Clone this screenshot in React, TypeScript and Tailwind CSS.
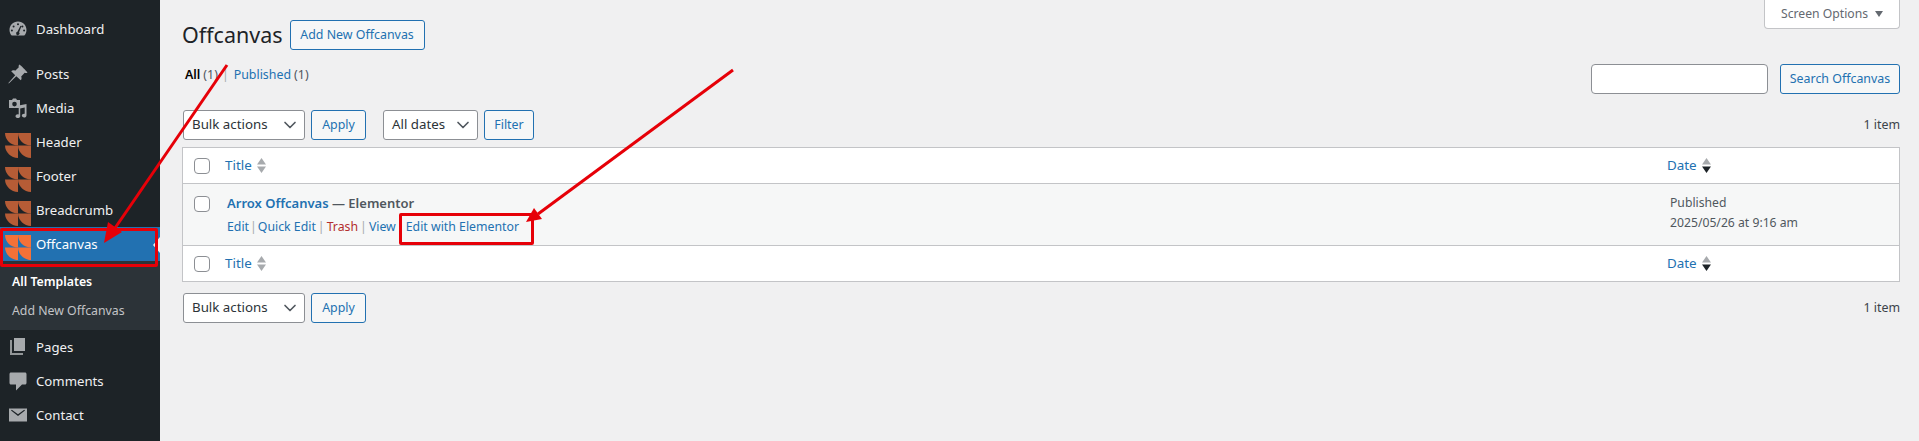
import { ChevronDown } from 'lucide-react';

const FONT = "font-['Noto_Sans',sans-serif]";

function LogoIcon({ color }: { color: string }) {
  return (
    <svg viewBox="0 0 26 25" className="w-[26px] h-[25px] shrink-0 mt-[7px]" fill={color}>
      <path d="M0 0H13V12.500C6 12.500 0 7 0 0Z" />
      <path d="M13 0H26V12.500C19 12.500 13 7 13 0Z" />
      <path d="M0 12.500H13V25C6 25 0 19 0 12.500Z" />
      <path d="M13 12.500H26V25C19 25 13 19 13 12.500Z" />
    </svg>
  );
}

function DashIcon() {
  return (
    <svg viewBox="0 0 20 20" className="w-[20px] h-[20px]" fill="#a7aaad">
      <path d="M10 2.500C5 2.500 1.500 6.300 1.500 11c0 2.200.8 4.200 2.200 5.600h12.600c1.400-1.400 2.200-3.400 2.200-5.600 0-4.700-3.500-8.500-8.500-8.500zM10 4.300a1 1 0 110 2 1 1 0 010-2zM5.600 6.400a1 1 0 110 2 1 1 0 010-2zM14.400 6.400a1 1 0 110 2 1 1 0 010-2zM3.900 10.600a1 1 0 110 2 1 1 0 010-2zM16.100 10.600a1 1 0 110 2 1 1 0 010-2zM12.500 6.800l.9.400-2.300 6.100a1.700 1.700 0 11-1.700-.5z" fillRule="evenodd" />
    </svg>
  );
}

function PinIcon() {
  return (
    <svg viewBox="0 0 20 20" className="w-[20px] h-[20px]" fill="#a7aaad">
      <path d="M11.500.5c2 1.500 6 5.500 8 8-.8.600-1.800.700-2.800.3l-3.500 3.600c.6 1.500.4 2.900-.4 3.900L8.300 12.300.8 19.500l-.4-.4 6.800-7.900-4-4c1-.9 2.500-1.100 4-.5l3.600-3.500c-.4-1.100-.1-2 .7-2.700z" />
    </svg>
  );
}

function MediaIcon() {
  return (
    <svg viewBox="0 0 20 20" className="w-[20px] h-[20px]" fill="#a7aaad">
      <path fillRule="evenodd" d="M1 2h3l1-1.500h3L9 2h3v8H1zM6.500 3.800a2.300 2.300 0 100 4.600 2.300 2.300 0 000-4.600z" />
      <path d="M18.500 6v11.200c0 1.400-1.100 2.300-2.400 2.300s-2.300-.8-2.300-1.900 1-1.900 2.200-1.900c.3 0 .5 0 .7.100V9.500l-4.500 1V18.500c0 .9-1 1.500-2.300 1.500S7.500 19.200 7.500 18.200s1-1.900 2.300-1.900c.3 0 .6 0 .9.100V7.500z" />
    </svg>
  );
}

function PagesIcon() {
  return (
    <svg viewBox="0 0 20 20" className="w-[20px] h-[20px]" fill="#a7aaad">
      <path d="M6 1h11v13H6z" />
      <path d="M4 3v13h11v2H2V3z" opacity="0.85" />
    </svg>
  );
}

function CommentIcon() {
  return (
    <svg viewBox="0 0 20 20" className="w-[20px] h-[20px]" fill="#a7aaad">
      <path d="M3 1.500h14c.8 0 1.500.7 1.500 1.500v9c0 .8-.7 1.500-1.500 1.500h-3l-6 6v-6H3c-.8 0-1.500-.7-1.500-1.500V3c0-.8.7-1.500 1.500-1.500z" />
    </svg>
  );
}

function MailIcon() {
  return (
    <svg viewBox="0 0 20 20" className="w-[20px] h-[20px]" fill="#a7aaad">
      <path d="M1 3.500h18v13H1zM3 5.500l7 5.500 7-5.500-.8-.8L10 9.300 3.800 4.700z" fillRule="evenodd" />
    </svg>
  );
}

function MenuItem({ icon, label, active }: { icon: React.ReactNode; label: string; active?: boolean }) {
  return (
    <div className={`h-[34px] flex items-center shrink-0 relative ${active ? 'bg-[#2271b1] text-white' : 'text-[#f0f0f1]'}`}>
      <div className="w-[36px] flex justify-center items-center">{icon}</div>
      <span className="text-[13.2px] mt-[1px]">{label}</span>
    </div>
  );
}

function SortArrows({ dark }: { dark?: boolean }) {
  return (
    <svg viewBox="0 0 9 15" className="w-[9px] h-[15px] ml-[5px]">
      <path d="M4.500 0L9 6.500H0z" fill="#a7aaad" />
      <path d="M4.500 15L0 8.500h9z" fill={dark ? '#1d2327' : '#a7aaad'} />
    </svg>
  );
}

function Checkbox() {
  return <div className="w-[16px] h-[16px] bg-white border border-[#8c8f94] rounded-[4px] shrink-0" />;
}

function WpButton({ children, className = '' }: { children: React.ReactNode; className?: string }) {
  return (
    <div className={`h-[30px] flex items-center justify-center border border-[#2271b1] rounded-[3px] bg-[#f6f7f7] text-[#2271b1] text-[12.4px] ${className}`}>
      {children}
    </div>
  );
}

function WpSelect({ label, className = '' }: { label: string; className?: string }) {
  return (
    <div className={`h-[30px] flex items-center justify-between pl-[8px] pr-[4px] border border-[#8c8f94] rounded-[3px] bg-white text-[#2c3338] text-[13.3px] ${className}`}>
      <span>{label}</span>
      <ChevronDown className="w-[20px] h-[20px] text-[#50575e]" strokeWidth={2} />
    </div>
  );
}

function HeaderRow({ border }: { border: string }) {
  return (
    <div className={`h-[36px] flex items-center bg-white ${border} border-[#c3c4c7]`}>
      <div className="w-[35px] flex justify-end pr-[8px]"><Checkbox /></div>
      <div className="flex-1 flex items-center pl-[7px] text-[13.4px] text-[#2271b1]">
        <span>Title</span>
        <SortArrows />
      </div>
      <div className="w-[232px] flex items-center text-[13.4px] text-[#2271b1]">
        <span>Date</span>
        <SortArrows dark />
      </div>
    </div>
  );
}

export default function App() {
  return (
    <div className={`relative flex w-[1919px] h-[441px] overflow-hidden bg-[#f0f0f1] ${FONT}`}>
      <aside className="w-[160px] shrink-0 bg-[#1d2327] flex flex-col pt-[12px]">
        <MenuItem icon={<DashIcon />} label="Dashboard" />
        <div className="h-[11px] shrink-0" />
        <MenuItem icon={<PinIcon />} label="Posts" />
        <MenuItem icon={<MediaIcon />} label="Media" />
        <MenuItem icon={<LogoIcon color="#b65c36" />} label="Header" />
        <MenuItem icon={<LogoIcon color="#b65c36" />} label="Footer" />
        <MenuItem icon={<LogoIcon color="#b65c36" />} label="Breadcrumb" />
        <MenuItem active icon={<LogoIcon color="#f57138" />} label="Offcanvas" />
        <div className="bg-[#2c3338] h-[69px] shrink-0 flex flex-col pt-[7px] pl-[12px] text-[12.3px]">
          <div className="h-[29px] flex items-center font-semibold text-white">All Templates</div>
          <div className="h-[29px] flex items-center text-[#c3c4c7]">Add New Offcanvas</div>
        </div>
        <MenuItem icon={<PagesIcon />} label="Pages" />
        <MenuItem icon={<CommentIcon />} label="Comments" />
        <MenuItem icon={<MailIcon />} label="Contact" />
      </aside>

      <main className="flex-1 flex flex-col pl-[22px] pr-[19px] text-[#3c434a]">
        <div className="h-[29px] flex justify-end shrink-0">
          <div className="w-[136px] flex items-center justify-center gap-[7px] bg-white border border-t-0 border-[#c3c4c7] rounded-b-[4px] text-[12.2px] text-[#646970]">
            <span>Screen Options</span>
            <svg viewBox="0 0 8 6" className="w-[8px] h-[6px]"><path d="M0 0h8L4 6z" fill="#646970" /></svg>
          </div>
        </div>

        <div className="flex items-start justify-between h-[81px] shrink-0">
          <div className="flex flex-col">
            <div className="flex items-center gap-[7px] -mt-[9px]">
              <h1 className="text-[21.5px] leading-[30px] text-[#1d2327]">Offcanvas</h1>
              <WpButton className="w-[135px]">Add New Offcanvas</WpButton>
            </div>
            <div className="flex items-center mt-[16px] ml-[3px] text-[12.4px]">
              <span className="font-semibold text-black">All</span>
              <span className="text-[#50575e] ml-[3px]">(1)</span>
              <span className="text-[#a7aaad] ml-[4px] mr-[5px]">|</span>
              <span className="text-[#2271b1]">Published</span>
              <span className="text-[#50575e] ml-[3px]">(1)</span>
            </div>
          </div>
          <div className="flex gap-[12px] mt-[35px]">
            <div className="w-[177px] h-[30px] bg-white border border-[#8c8f94] rounded-[4px]" />
            <WpButton className="w-[120px]">Search Offcanvas</WpButton>
          </div>
        </div>

        <div className="flex items-center h-[30px] shrink-0">
          <WpSelect label="Bulk actions" className="w-[122px] ml-[1px]" />
          <WpButton className="w-[55px] ml-[6px]">Apply</WpButton>
          <WpSelect label="All dates" className="w-[95px] ml-[17px]" />
          <WpButton className="w-[50px] ml-[6px]">Filter</WpButton>
          <span className="ml-auto text-[12.4px]">1 item</span>
        </div>

        <div className="mt-[7px] border border-[#c3c4c7] bg-white shrink-0">
          <HeaderRow border="border-b" />
          <div className="h-[61px] flex bg-[#f6f7f7]">
            <div className="w-[35px] flex justify-end pr-[8px] pt-[12px]"><Checkbox /></div>
            <div className="flex-1 pl-[9px] pt-[9px]">
              <div className="text-[13px] font-semibold text-[#50575e] leading-[20px]">
                <span className="text-[#2271b1]">Arrox Offcanvas</span> — Elementor
              </div>
              <div className="flex items-center mt-[4px] text-[12.3px] leading-[20px] text-[#a7aaad]">
                <span className="text-[#2271b1]">Edit</span>
                <span className="mx-[1px]">|</span>
                <span className="text-[#2271b1]">Quick Edit</span>
                <span className="mx-[2px]">|</span>
                <span className="text-[#b32d2e]">Trash</span>
                <span className="mx-[2px]">|</span>
                <span className="text-[#2271b1]">View</span>
                <span className="ml-[10px] text-[#2271b1]">Edit with Elementor</span>
              </div>
            </div>
            <div className="w-[229px] pt-[9px] text-[12.2px] leading-[20px] text-[#50575e]">
              <div>Published</div>
              <div>2025/05/26 at 9:16 am</div>
            </div>
          </div>
          <HeaderRow border="border-t" />
        </div>

        <div className="flex items-center h-[30px] shrink-0 mt-[11px]">
          <WpSelect label="Bulk actions" className="w-[122px] ml-[1px]" />
          <WpButton className="w-[55px] ml-[6px]">Apply</WpButton>
          <span className="ml-auto text-[12.4px]">1 item</span>
        </div>
      </main>

      {/* annotations drawn over the screenshot */}
      <svg className="absolute left-0 top-0 w-[1919px] h-[441px] pointer-events-none" viewBox="0 0 1919 441">
        <path d="M153 245l7-8v16z" fill="#f0f0f1" />
        <path d="M227 65L113 231" stroke="#e60008" strokeWidth="3" fill="none" />
        <path d="M104 243l4-21 14 10z" fill="#e60008" />
        <path d="M733 70L538 214" stroke="#e60008" strokeWidth="3" fill="none" />
        <path d="M526 222l8-14 8 11z" fill="#e60008" />
      </svg>
      <div className="absolute left-0 top-[228px] w-[158px] h-[39px] border-[3px] border-[#e60008] rounded-[2px]" />
      <div className="absolute left-[399px] top-[213px] w-[135px] h-[32px] border-[3px] border-[#e60008] rounded-[2px]" />
    </div>
  );
}
